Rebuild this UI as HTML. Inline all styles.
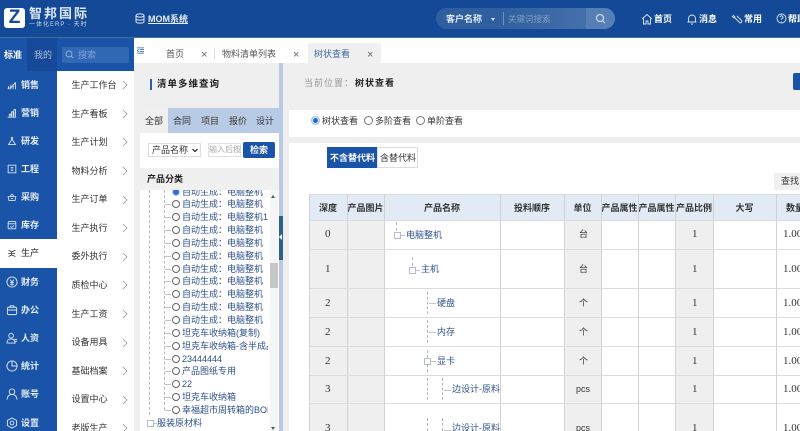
<!DOCTYPE html>
<html><head><meta charset="utf-8">
<style>
html,body{margin:0;padding:0;width:800px;height:431px;overflow:hidden;background:#fff}
body{position:relative;font-family:"Liberation Sans","Noto Sans CJK SC",sans-serif;font-size:9px;color:#333}
div,span,svg{position:absolute}
.t{white-space:nowrap;line-height:12px}
.s{left:21px;color:#e8eef8;font-size:9px;font-weight:bold}
.i{left:7px;width:10px;height:10px;fill:none;stroke:#dfe8f6;stroke-width:1.1}
.j{left:6px;width:12px;height:12px;fill:none;stroke:#dfe8f6;stroke-width:1}
.m{left:71.500px;color:#333;font-size:9px}
.c{left:120px;width:10px;height:10px;fill:none;stroke:#999;stroke-width:.8}
.rd{left:172px;width:8px;height:8px;box-sizing:border-box;border:1px solid #666;border-radius:50%;background:#fff}
.ds{left:165px;width:6px;height:0;border-top:1px solid #c4c4c4}
.th{top:194px;height:26px;line-height:28px;background:#e2eaf6;text-align:center;font-weight:bold;font-size:9px;color:#333;white-space:nowrap;overflow:hidden}
.v{top:194px;width:1px;height:237px;background:#d2d2d2}
.h{left:309px;width:491px;height:1px;background:#dcdcdc}
.g{background:#efefef}
.n{font-family:"Liberation Serif","Noto Sans CJK SC",serif;font-size:11px;white-space:nowrap;line-height:12px}
.p{color:#2f5288;font-size:9px;white-space:nowrap;line-height:12px}
.u{font-size:9px}
.dl{width:0;border-left:1px dashed #b8b8b8}
.dh{height:0;border-top:1px solid #c4c4c4}
.bx{width:5px;height:5px;border:1px solid #b4bccb;background:#fff}
.tb{color:#fff;font-size:9px;font-weight:bold}
.tr{left:42px;color:#2f5288;font-size:9px}
</style></head><body>

<div style="left:0;top:0;width:800px;height:37px;background:#134997"></div>
<div style="left:0;top:37px;width:800px;height:1px;background:#3d6f9f"></div>

<div style="left:4px;top:8px;width:21px;height:20px;background:#fff;border-radius:3px"></div>
<div class="t" style="left:4px;top:8px;width:21px;height:20px;line-height:20px;text-align:center;color:#134997;font-size:19px;font-weight:bold">Z</div>
<div class="t" style="left:29px;top:6px;color:#dfe8f6;font-size:13px;font-weight:bold;letter-spacing:2px;line-height:16px">智邦国际</div>
<div class="t" style="left:29px;top:20px;color:#c9d8ee;font-size:6px;letter-spacing:1px;line-height:10px">一体化ERP · 天时</div>
<svg style="left:135px;top:13px;width:10px;height:11px" viewBox="0 0 10 11" fill="none" stroke="#dfe8f6" stroke-width="1"><ellipse cx="5" cy="2.500" rx="4" ry="1.600"/><path d="M1 2.500v6c0 1 1.800 1.600 4 1.600s4-.6 4-1.600v-6M1 5.500c0 1 1.800 1.600 4 1.600s4-.6 4-1.600"/></svg>
<div class="t" style="left:148px;top:13px;color:#e6eef9;font-size:9px;font-weight:bold;text-decoration:underline">MOM系统</div>

<div style="left:436px;top:8px;width:179px;height:21px;border-radius:11px;background:linear-gradient(90deg,#2f5f9f 0%,#2f5f9f 35%,#4c76ae 100%)"></div>
<div style="left:586px;top:8px;width:29px;height:21px;border-radius:0 11px 11px 0;background:#5680b5"></div>
<div class="t" style="left:446px;top:13px;color:#e4ecf7;font-size:9px;font-weight:bold">客户名称</div>
<div style="left:491px;top:18px;width:0;height:0;border-left:2.500px solid transparent;border-right:2.500px solid transparent;border-top:3px solid #dfe8f6"></div>
<div style="left:503px;top:12px;width:1px;height:13px;background:#6f90bc"></div>
<div class="t" style="left:508px;top:13px;color:#7f9dc6;font-size:8.500px">关键词搜索</div>
<svg style="left:595px;top:13px;width:11px;height:11px" viewBox="0 0 11 11" fill="none" stroke="#dfe8f6" stroke-width="1"><circle cx="5" cy="5" r="3.500"/><path d="M7.600 7.600L10 10"/></svg>

<svg style="left:641px;top:13px;width:12px;height:12px" viewBox="0 0 12 12" fill="none" stroke="#dfe8f6" stroke-width=".9"><path d="M1 6L6 1.500 11 6M2.500 5.500V11h2.500V8h2v3h2.500V5.500"/></svg>
<div class="t tb" style="left:654px;top:13px">首页</div>
<svg style="left:686px;top:13px;width:12px;height:12px" viewBox="0 0 12 12" fill="none" stroke="#dfe8f6" stroke-width=".9"><path d="M2.500 9V5.500a3.500 3.500 0 0 1 7 0V9M1.500 9h9M5 11h2"/></svg>
<div class="t tb" style="left:699px;top:13px">消息</div>
<svg style="left:731px;top:13px;width:12px;height:12px" viewBox="0 0 12 12" fill="none" stroke="#dfe8f6" stroke-width=".9"><path d="M2 2l2 2-1 1-2-2M4 5l5 5 1.500-.5.5-1.500-5-5"/></svg>
<div class="t tb" style="left:744px;top:13px">常用</div>
<svg style="left:776px;top:13px;width:11px;height:11px" viewBox="0 0 11 11" fill="none" stroke="#dfe8f6" stroke-width=".9"><circle cx="5.500" cy="5.500" r="4.500"/><path d="M4 4.300a1.500 1.500 0 1 1 2 1.400c-.4.2-.5.500-.5 1M5.500 8v.6"/></svg>
<div class="t tb" style="left:788px;top:13px">帮助</div>

<div style="left:0;top:38px;width:57px;height:393px;background:#1a54a8"></div>
<div style="left:27px;top:38px;width:30px;height:33px;background:#164a98"></div>
<div style="left:57px;top:38px;width:77px;height:33px;background:#1a54a8"></div>
<div style="left:62px;top:47px;width:67px;height:16px;border-radius:2px;background:#3269b5"></div>
<div class="t" style="left:4px;top:49px;color:#fff;font-size:9px;font-weight:bold">标准</div>
<div class="t" style="left:34px;top:49px;color:#a9bfdf;font-size:9px">我的</div>
<svg style="left:65px;top:50px;width:9px;height:9px" viewBox="0 0 9 9" fill="none" stroke="#8fb0dc" stroke-width=".9"><circle cx="4" cy="4" r="3"/><path d="M6.200 6.200L8 8"/></svg>
<div class="t" style="left:78px;top:49px;color:#7fa3d6;font-size:9px">搜索</div>

<div style="left:0;top:239px;width:57px;height:29px;background:#fff"></div>

<svg class="i" style="top:80px" viewBox="0 0 13 13"><path d="M1 11c3 0 7-3 10-8M2 12V8M5 12V6M8 12V5M11 12V3"/></svg>
<div class="t s" style="top:79px">销售</div>
<svg class="i" style="top:108px" viewBox="0 0 13 13"><path d="M1 12h11M3 11V8h2v3M6 11V5h2v6M9 11V2h2v9"/></svg>
<div class="t s" style="top:107px">营销</div>
<svg class="i" style="top:136px" viewBox="0 0 13 13"><path d="M5 2h3M6 2v3L2 11h9L7 5V2"/></svg>
<div class="t s" style="top:135px">研发</div>
<svg class="i" style="top:164px" viewBox="0 0 13 13"><rect x="1.500" y="1.500" width="10" height="10"/><path d="M5 4.500h3M5 6.500h3M5 8.500h3"/></svg>
<div class="t s" style="top:163px">工程</div>
<svg class="i" style="top:192px" viewBox="0 0 13 13"><path d="M1.500 6h10l-1 5h-8zM4 6l2-3h1l2 3M5 8.500h3"/></svg>
<div class="t s" style="top:191px">采购</div>
<svg class="i" style="top:220px" viewBox="0 0 13 13"><rect x="1.500" y="2" width="10" height="9.500" rx="1.500"/><path d="M1.500 5h10M4 8.500l2 1 3-2"/></svg>
<div class="t s" style="top:219px">库存</div>
<svg class="i" style="top:248px;stroke:#333" viewBox="0 0 13 13"><path d="M2 3l4 2 5-2M2 11l4-2 5 2M6 5v4M1.500 7h9"/></svg>
<div class="t s" style="top:247px;color:#222;font-weight:normal">生产</div>
<svg class="j" style="top:276px" viewBox="0 0 13 13"><circle cx="6.500" cy="6.500" r="5.500"/><path d="M4.500 4l2 2.500 2-2.500M4.500 7h4M4.500 9h4M6.500 6.500V10.500"/></svg>
<div class="t s" style="top:276px">财务</div>
<svg class="j" style="top:304px" viewBox="0 0 13 13"><rect x="1.500" y="3.500" width="10" height="8" rx="1.500"/><path d="M4.500 3.500V2h4v1.500M1.500 6.500h10"/></svg>
<div class="t s" style="top:304px">办公</div>
<svg class="j" style="top:332px" viewBox="0 0 13 13"><circle cx="5.500" cy="4" r="2.500"/><path d="M1 12c0-3 2-4.500 4.500-4.500S9.500 9 10 12zM9 8h3M9 10h3"/></svg>
<div class="t s" style="top:332px">人资</div>
<svg class="j" style="top:360px" viewBox="0 0 13 13"><circle cx="6.500" cy="6.500" r="5.500"/><path d="M6.500 1v5.500H12"/></svg>
<div class="t s" style="top:360px">统计</div>
<svg class="j" style="top:388px" viewBox="0 0 13 13"><circle cx="6.500" cy="4" r="3"/><path d="M1 12.500c.5-3.500 2.500-5.500 5.500-5.500s5 2 5.500 5.500"/></svg>
<div class="t s" style="top:388px">账号</div>
<svg class="j" style="top:417px" viewBox="0 0 13 13"><path d="M6.500 1l5 2.800v5.400l-5 2.800-5-2.800V3.800z"/><circle cx="6.500" cy="6.500" r="2"/></svg>
<div class="t s" style="top:417px">设置</div>

<div style="left:57px;top:71px;width:77px;height:360px;background:#fff"></div>
<div class="t m" style="top:79px">生产工作台</div><svg class="c" style="top:80px" viewBox="0 0 10 10"><path d="M3 1l4 4-4 4"/></svg>
<div class="t m" style="top:108px">生产看板</div><svg class="c" style="top:109px" viewBox="0 0 10 10"><path d="M3 1l4 4-4 4"/></svg>
<div class="t m" style="top:136px">生产计划</div><svg class="c" style="top:137px" viewBox="0 0 10 10"><path d="M3 1l4 4-4 4"/></svg>
<div class="t m" style="top:165px">物料分析</div><svg class="c" style="top:166px" viewBox="0 0 10 10"><path d="M3 1l4 4-4 4"/></svg>
<div class="t m" style="top:193px">生产订单</div><svg class="c" style="top:195px" viewBox="0 0 10 10"><path d="M3 1l4 4-4 4"/></svg>
<div class="t m" style="top:222px">生产执行</div><svg class="c" style="top:223px" viewBox="0 0 10 10"><path d="M3 1l4 4-4 4"/></svg>
<div class="t m" style="top:250px">委外执行</div><svg class="c" style="top:252px" viewBox="0 0 10 10"><path d="M3 1l4 4-4 4"/></svg>
<div class="t m" style="top:279px">质检中心</div><svg class="c" style="top:280px" viewBox="0 0 10 10"><path d="M3 1l4 4-4 4"/></svg>
<div class="t m" style="top:308px">生产工资</div><svg class="c" style="top:309px" viewBox="0 0 10 10"><path d="M3 1l4 4-4 4"/></svg>
<div class="t m" style="top:336px">设备用具</div><svg class="c" style="top:338px" viewBox="0 0 10 10"><path d="M3 1l4 4-4 4"/></svg>
<div class="t m" style="top:365px">基础档案</div><svg class="c" style="top:366px" viewBox="0 0 10 10"><path d="M3 1l4 4-4 4"/></svg>
<div class="t m" style="top:393px">设置中心</div><svg class="c" style="top:395px" viewBox="0 0 10 10"><path d="M3 1l4 4-4 4"/></svg>
<div class="t m" style="top:422px">老版生产</div><svg class="c" style="top:423px" viewBox="0 0 10 10"><path d="M3 1l4 4-4 4"/></svg>

<div style="left:134px;top:38px;width:666px;height:25px;background:#fff"></div>
<svg style="left:137px;top:47px;width:7px;height:7px" viewBox="0 0 8 8" fill="none" stroke="#2d5fa8" stroke-width=".8"><path d="M0 1h8M3 3h5M3 5h5M0 7h8M2 2.500L0 4l2 1.500"/></svg>
<div class="t" style="left:166px;top:48px;color:#555;font-size:9px">首页</div>
<div class="t" style="left:201px;top:49px;color:#666;font-size:11px">×</div>
<div style="left:214px;top:48px;width:1px;height:11px;background:#ddd"></div>
<div class="t" style="left:222px;top:48px;color:#555;font-size:9px">物料清单列表</div>
<div class="t" style="left:293px;top:49px;color:#666;font-size:11px">×</div>
<div style="left:308px;top:43px;width:73px;height:20px;background:#f0f0f0"></div>
<div class="t" style="left:314px;top:48px;color:#3f6aa5;font-size:9px">树状查看</div>
<div class="t" style="left:367px;top:49px;color:#666;font-size:11px">×</div>

<div style="left:134px;top:63px;width:666px;height:368px;background:#efefef"></div>

<div style="left:150px;top:79px;width:2px;height:11px;background:#2f5f9f"></div>
<div class="t" style="left:157px;top:79px;color:#222;font-size:9.500px;font-weight:bold;letter-spacing:1px">清单多维查询</div>
<div style="left:140px;top:108px;width:139px;height:25px;background:#b9cbe4"></div>
<div style="left:140px;top:108px;width:28px;height:25px;background:#f0f0f0"></div>
<div class="t" style="left:145px;top:115px;font-size:9px;color:#333">全部</div>
<div class="t" style="left:173px;top:115px;font-size:9px;color:#333">合同</div>
<div class="t" style="left:201px;top:115px;font-size:9px;color:#333">项目</div>
<div class="t" style="left:229px;top:115px;font-size:9px;color:#333">报价</div>
<div class="t" style="left:256px;top:115px;font-size:9px;color:#333">设计</div>
<div style="left:140px;top:133px;width:139px;height:298px;background:#fff"></div>
<div style="left:148px;top:143px;width:53px;height:14px;box-sizing:border-box;border:1px solid #ddd;background:#fff"></div>
<div class="t" style="left:152px;top:144px;font-size:9px;color:#333">产品名称</div>
<svg style="left:192px;top:148px;width:6px;height:5px" viewBox="0 0 6 5" fill="none" stroke="#222" stroke-width="1.200"><path d="M.5 1L3 3.500 5.500 1"/></svg>
<div style="left:208px;top:143px;width:33px;height:14px;box-sizing:border-box;border:1px solid #e0e0e0"></div>
<div class="t" style="left:209px;top:144px;width:32px;overflow:hidden;font-size:8px;color:#aaa">输入后按</div>
<div style="left:243px;top:142px;width:32px;height:16px;background:#1a54a8;border-radius:2px"></div>
<div class="t" style="left:250px;top:144px;color:#fff;font-size:9px;font-weight:bold">检索</div>

<div style="left:149px;top:190px;width:0;height:225px;border-left:1px dashed #bbb"></div>
<div style="left:164px;top:190px;width:0;height:220px;border-left:1px dashed #bbb"></div>
<div class="ds" style="top:204px"></div><div class="ds" style="top:217px"></div><div class="ds" style="top:230px"></div><div class="ds" style="top:243px"></div><div class="ds" style="top:256px"></div><div class="ds" style="top:269px"></div><div class="ds" style="top:281px"></div><div class="ds" style="top:294px"></div><div class="ds" style="top:307px"></div><div class="ds" style="top:320px"></div><div class="ds" style="top:333px"></div><div class="ds" style="top:346px"></div><div class="ds" style="top:359px"></div><div class="ds" style="top:371px"></div><div class="ds" style="top:384px"></div><div class="ds" style="top:397px"></div><div class="ds" style="top:410px"></div>

<div class="rd" style="top:188px;background:#2f6fdc;border-color:#bcd"></div>
<div class="rd" style="top:200px"></div><div class="rd" style="top:213px"></div><div class="rd" style="top:226px"></div><div class="rd" style="top:239px"></div><div class="rd" style="top:252px"></div><div class="rd" style="top:265px"></div><div class="rd" style="top:277px"></div><div class="rd" style="top:290px"></div><div class="rd" style="top:303px"></div><div class="rd" style="top:316px"></div><div class="rd" style="top:329px"></div><div class="rd" style="top:342px"></div><div class="rd" style="top:355px"></div><div class="rd" style="top:367px"></div><div class="rd" style="top:380px"></div><div class="rd" style="top:393px"></div><div class="rd" style="top:406px"></div>

<div style="left:140px;top:190px;width:139px;height:241px;overflow:hidden">
<div class="t tr" style="top:-4px">自动生成：电脑整机</div>
<div class="t tr" style="top:8px">自动生成：电脑整机</div>
<div class="t tr" style="top:21px">自动生成：电脑整机1</div>
<div class="t tr" style="top:34px">自动生成：电脑整机</div>
<div class="t tr" style="top:47px">自动生成：电脑整机</div>
<div class="t tr" style="top:60px">自动生成：电脑整机</div>
<div class="t tr" style="top:73px">自动生成：电脑整机</div>
<div class="t tr" style="top:85px">自动生成：电脑整机</div>
<div class="t tr" style="top:98px">自动生成：电脑整机</div>
<div class="t tr" style="top:111px">自动生成：电脑整机</div>
<div class="t tr" style="top:124px">自动生成：电脑整机</div>
<div class="t tr" style="top:137px">坦克车收纳箱(复制)</div>
<div class="t tr" style="top:150px;width:86px;overflow:hidden">坦克车收纳箱-含半成品</div>
<div class="t tr" style="top:163px">23444444</div>
<div class="t tr" style="top:175px">产品图纸专用</div>
<div class="t tr" style="top:188px">22</div>
<div class="t tr" style="top:201px">坦克车收纳箱</div>
<div class="t tr" style="top:214px;width:86px;overflow:hidden">幸福超市周转箱的BOM</div>
<div class="t tr" style="left:17px;top:227px">服装原材料</div>
</div>
<div style="left:147px;top:420px;width:5px;height:5px;border:1px solid #b4bccb;background:#fff"></div>
<div class="dh" style="left:154px;top:423px;width:3px"></div>

<div style="left:140px;top:168px;width:139px;height:22px;background:#f0f0f0"></div>
<div class="t" style="left:147px;top:173px;font-size:9px;font-weight:bold;color:#222">产品分类</div>

<div style="left:270px;top:190px;width:8px;height:241px;background:#f6f6f6"></div>
<div style="left:270px;top:263px;width:8px;height:25px;background:#c6c6c6"></div>
<div style="left:271px;top:195px;width:0;height:0;border-left:2.500px solid transparent;border-right:2.500px solid transparent;border-bottom:3px solid #555"></div>
<div style="left:271px;top:427px;width:0;height:0;border-left:2.500px solid transparent;border-right:2.500px solid transparent;border-top:3px solid #555"></div>

<div style="left:279px;top:63px;width:4px;height:368px;background:#b9cbe4"></div>
<div style="left:279px;top:216px;width:4px;height:44px;background:#2b6290"></div>
<div style="left:279px;top:234px;width:0;height:0;border-top:3px solid transparent;border-bottom:3px solid transparent;border-right:3px solid #fff"></div>

<div class="t" style="left:304px;top:77px;color:#999;font-size:9px;letter-spacing:1px">当前位置：</div>
<div class="t" style="left:355px;top:77px;color:#222;font-size:9px;font-weight:bold;letter-spacing:1px">树状查看</div>
<div style="left:793px;top:73px;width:7px;height:17px;background:#1a54a8;border-radius:2px 0 0 2px"></div>

<div style="left:289px;top:110px;width:511px;height:27px;background:#fff"></div>
<div style="left:311px;top:116px;width:9px;height:9px;box-sizing:border-box;border-radius:50%;border:1px solid #9cc0ee;background:#1f66d8;box-shadow:inset 0 0 0 1px #fff"></div>
<div class="t" style="left:322px;top:115px;font-size:9px;color:#333">树状查看</div>
<div style="left:364px;top:116px;width:9px;height:9px;box-sizing:border-box;border-radius:50%;border:1px solid #777;background:#fff"></div>
<div class="t" style="left:375px;top:115px;font-size:9px;color:#333">多阶查看</div>
<div style="left:416px;top:116px;width:9px;height:9px;box-sizing:border-box;border-radius:50%;border:1px solid #777;background:#fff"></div>
<div class="t" style="left:427px;top:115px;font-size:9px;color:#333">单阶查看</div>

<div style="left:289px;top:143px;width:511px;height:288px;background:#fff"></div>
<div style="left:327px;top:147px;width:50px;height:21px;background:#1a54a8"></div>
<div class="t" style="left:330px;top:152px;color:#fff;font-size:9px;font-weight:bold">不含替代料</div>
<div style="left:377px;top:147px;width:41px;height:21px;box-sizing:border-box;border:1px solid #ddd;background:#fff"></div>
<div class="t" style="left:380px;top:152px;color:#333;font-size:9px">含替代料</div>
<div style="left:774px;top:173px;width:26px;height:17px;background:#f0f0f0"></div>
<div class="t" style="left:781px;top:175px;font-size:9px;color:#333">查找</div>

<div class="g" style="left:309px;top:220px;width:75px;height:211px"></div>
<div class="g" style="left:564px;top:220px;width:37px;height:211px"></div>
<div class="g" style="left:675px;top:220px;width:38px;height:211px"></div>

<div class="th" style="left:309px;width:38px">深度</div>
<div class="th" style="left:347px;width:37px">产品图片</div>
<div class="th" style="left:384px;width:116px">产品名称</div>
<div class="th" style="left:500px;width:64px">投料顺序</div>
<div class="th" style="left:564px;width:37px">单位</div>
<div class="th" style="left:601px;width:37px">产品属性</div>
<div class="th" style="left:638px;width:37px">产品属性</div>
<div class="th" style="left:675px;width:38px">产品比例</div>
<div class="th" style="left:713px;width:63px">大写</div>
<div class="th" style="left:776px;width:24px;padding-left:10px;box-sizing:border-box;text-align:left">数量</div>

<div class="v" style="left:309px"></div><div class="v" style="left:347px"></div><div class="v" style="left:384px"></div><div class="v" style="left:500px"></div><div class="v" style="left:564px"></div><div class="v" style="left:601px"></div><div class="v" style="left:638px"></div><div class="v" style="left:675px"></div><div class="v" style="left:713px"></div><div class="v" style="left:776px"></div>
<div class="h" style="top:194px"></div><div class="h" style="top:220px"></div><div class="h" style="top:249px"></div><div class="h" style="top:288px"></div><div class="h" style="top:317px"></div><div class="h" style="top:346px"></div><div class="h" style="top:375px"></div><div class="h" style="top:403px"></div>

<div class="t n" style="left:325px;top:228px">0</div><div class="t n" style="left:325px;top:263px">1</div><div class="t n" style="left:325px;top:297px">2</div><div class="t n" style="left:325px;top:326px">2</div><div class="t n" style="left:325px;top:355px">2</div><div class="t n" style="left:325px;top:383px">3</div><div class="t n" style="left:325px;top:422px">3</div>

<div class="t u" style="left:579px;top:228px">台</div><div class="t u" style="left:579px;top:263px">台</div><div class="t u" style="left:579px;top:297px">个</div><div class="t u" style="left:579px;top:326px">个</div><div class="t u" style="left:579px;top:355px">个</div><div class="t u" style="left:576px;top:383px">pcs</div><div class="t u" style="left:576px;top:422px">pcs</div>

<div class="t n" style="left:692px;top:228px">1</div><div class="t n" style="left:692px;top:263px">1</div><div class="t n" style="left:692px;top:297px">1</div><div class="t n" style="left:692px;top:326px">1</div><div class="t n" style="left:692px;top:355px">1</div><div class="t n" style="left:692px;top:383px">1</div><div class="t n" style="left:692px;top:422px">1</div>
<div class="t n" style="left:783px;top:228px">1.00</div><div class="t n" style="left:783px;top:263px">1.00</div><div class="t n" style="left:783px;top:297px">1.00</div><div class="t n" style="left:783px;top:326px">1.00</div><div class="t n" style="left:783px;top:355px">1.00</div><div class="t n" style="left:783px;top:383px">1.00</div><div class="t n" style="left:783px;top:422px">1.00</div>

<div class="dl" style="left:396px;top:222px;height:9px"></div><div class="bx" style="left:394px;top:232px"></div><div class="dh" style="left:401px;top:235px;width:4px"></div>
<div class="p" style="left:406px;top:229px">电脑整机</div>
<div class="dl" style="left:412px;top:257px;height:9px"></div><div class="bx" style="left:409px;top:267px"></div><div class="dh" style="left:416px;top:270px;width:4px"></div>
<div class="p" style="left:421px;top:263px">主机</div>
<div class="dl" style="left:427px;top:292px;height:22px"></div><div class="dh" style="left:429px;top:303px;width:7px"></div>
<div class="p" style="left:437px;top:297px">硬盘</div>
<div class="dl" style="left:427px;top:320px;height:23px"></div><div class="dh" style="left:429px;top:332px;width:7px"></div>
<div class="p" style="left:437px;top:326px">内存</div>
<div class="dl" style="left:427px;top:350px;height:22px"></div><div class="bx" style="left:424px;top:358px"></div><div class="dh" style="left:431px;top:361px;width:5px"></div>
<div class="p" style="left:437px;top:355px">显卡</div>
<div class="dl" style="left:427px;top:378px;height:22px"></div><div class="dl" style="left:442px;top:378px;height:22px"></div><div class="dh" style="left:444px;top:390px;width:7px"></div>
<div class="p" style="left:452px;top:383px;width:48px;overflow:hidden">边设计-原料</div>
<div class="dl" style="left:427px;top:418px;height:13px"></div><div class="dl" style="left:442px;top:418px;height:13px"></div><div class="dh" style="left:444px;top:430px;width:7px"></div>
<div class="p" style="left:452px;top:422px;width:48px;overflow:hidden">边设计-原料</div>

</body></html>
